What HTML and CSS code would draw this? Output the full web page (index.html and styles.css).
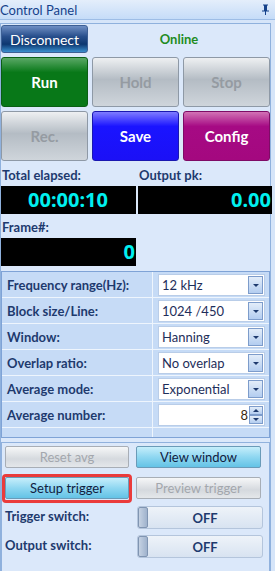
FILE: index.html
```html
<!DOCTYPE html>
<html lang="en">
<head>
    <meta charset="UTF-8">
    <title>Control Panel</title>
    <link rel="stylesheet" href="styles.css">
</head>
<body>
    <div class="header">
        <span>Control Panel</span>
        <svg class="pin" width="9" height="11" viewBox="0 0 9 11">
            <path d="M2 0.5h5v1h-1v5h2v1h-3v3.5h-1v-3.5h-3v-1h2v-5h-1z" fill="#15428b"/>
            <rect x="3" y="1.5" width="1" height="5" fill="#15428b"/>
        </svg>
    </div>

    <div class="content">
        <div class="top-row">
            <button class="btn-disconnect">Disconnect</button>
            <div class="status">Online</div>
        </div>

        <div class="big-grid">
            <button class="big big-run">Run</button>
            <button class="big big-off">Hold</button>
            <button class="big big-off">Stop</button>
            <button class="big big-off">Rec.</button>
            <button class="big big-save">Save</button>
            <button class="big big-config">Config</button>
        </div>

        <div class="meters">
            <div class="meter">
                <div class="meter-label">Total elapsed:</div>
                <div class="display center">00:00:10</div>
            </div>
            <div class="meter">
                <div class="meter-label">Output pk:</div>
                <div class="display">0.00</div>
            </div>
            <div class="meter">
                <div class="meter-label">Frame#:</div>
                <div class="display">0</div>
            </div>
        </div>

        <div class="settings">
            <div class="row">
                <div class="cell-label">Frequency range(Hz):</div>
                <div class="cell-value"><div class="combo"><span>12 kHz</span><i class="arrow"></i></div></div>
            </div>
            <div class="row">
                <div class="cell-label">Block size/Line:</div>
                <div class="cell-value"><div class="combo"><span>1024 /450</span><i class="arrow"></i></div></div>
            </div>
            <div class="row">
                <div class="cell-label">Window:</div>
                <div class="cell-value"><div class="combo"><span>Hanning</span><i class="arrow"></i></div></div>
            </div>
            <div class="row">
                <div class="cell-label">Overlap ratio:</div>
                <div class="cell-value"><div class="combo"><span>No overlap</span><i class="arrow"></i></div></div>
            </div>
            <div class="row">
                <div class="cell-label">Average mode:</div>
                <div class="cell-value"><div class="combo"><span>Exponential</span><i class="arrow"></i></div></div>
            </div>
            <div class="row">
                <div class="cell-label">Average number:</div>
                <div class="cell-value">
                    <div class="spin">
                        <span>8</span>
                        <div class="spin-btns"><i class="up"></i><i class="down"></i></div>
                    </div>
                </div>
            </div>
            <div class="row row-empty">
                <div class="cell-label"></div>
                <div class="cell-value"></div>
            </div>
        </div>

        <div class="actions">
            <div class="action-grid">
                <button class="act act-off">Reset avg</button>
                <button class="act act-on">View window</button>
                <div class="marked"><button class="act act-on">Setup trigger</button></div>
                <button class="act act-off">Preview trigger</button>
            </div>
            <div class="switch-row">
                <div class="switch-label">Trigger switch:</div>
                <div class="toggle"><i class="knob"></i><span>OFF</span></div>
            </div>
            <div class="switch-row">
                <div class="switch-label">Output switch:</div>
                <div class="toggle"><i class="knob"></i><span>OFF</span></div>
            </div>
        </div>
    </div>
</body>
</html>
```

FILE: styles.css
```css
body {
    margin: 0;
    width: 275px;
    height: 571px;
    overflow: hidden;
    background-color: #d6e5f9;
    font-family: Lato, "Noto Sans", sans-serif;
    font-size: 13px;
    color: #1e3a6e;
}

button {
    font-family: inherit;
    cursor: pointer;
}

.header {
    height: 19px;
    display: flex;
    align-items: center;
    justify-content: space-between;
    padding: 0 5px 0 0;
    background: linear-gradient(#e4eefb, #c5dcf8);
    border-bottom: 1px solid #9dbde6;
    color: #15428b;
    font-size: 13px;
}

.header .pin {
    display: block;
}

.content {
    margin-top: 3px;
    width: 269px;
    height: 548px;
    border: 1px solid #8fb1dd;
    border-bottom: none;
    padding: 1px 0 0 0;
    background-color: #dbe8fa;
}

.top-row {
    display: flex;
    align-items: center;
    height: 28px;
}

.btn-disconnect {
    width: 87px;
    height: 28px;
    margin: 0;
    border: 1px solid #3d5f94;
    border-radius: 3px;
    background: linear-gradient(#6f8fc4 0%, #284f8c 40%, #0d3770 70%, #3a8fce 100%);
    color: #ffffff;
    font-size: 14px;
}

.status {
    flex: 1;
    text-align: center;
    color: #1f8c1f;
    font-weight: bold;
    font-size: 13px;
}

.big-grid {
    display: grid;
    grid-template-columns: 87px 87px 87px;
    grid-auto-rows: 50px;
    gap: 4px 4px;
    margin-top: 4px;
}

.big {
    margin: 0;
    border-radius: 3px;
    font-size: 15px;
    font-weight: bold;
}

.big-run {
    border: 1px solid #0a5e14;
    background: linear-gradient(#5aa866 0%, #087818 30%, #087818 100%);
    color: #ffffff;
}

.big-off {
    border: 1px solid #8e99a6;
    background: linear-gradient(#eef0f2 0%, #b4bcc4 45%, #cfd5db 100%);
    color: #959ba2;
}

.big-save {
    border: 1px solid #1a18b0;
    background: linear-gradient(#7f7cff 0%, #1a14ff 30%, #1b10f6 100%);
    color: #ffffff;
}

.big-config {
    border: 1px solid #7e0b66;
    background: linear-gradient(#d272b5 0%, #a60a84 30%, #a4087f 100%);
    color: #ffffff;
}

.meters {
    display: grid;
    grid-template-columns: 135px 134px;
    gap: 3px 2px;
    margin-top: 4px;
}

.meter-label {
    height: 21px;
    line-height: 21px;
    padding-left: 1px;
    font-weight: bold;
    color: #1e3a6e;
}

.display {
    height: 28px;
    line-height: 28px;
    background-color: #000000;
    color: #00f0f0;
    font-family: "Noto Sans", sans-serif;
    font-size: 20px;
    font-weight: bold;
    text-align: right;
    padding-right: 1px;
}

.display.center {
    text-align: center;
}

.settings {
    margin-top: 5px;
    border: 1px solid #7fa3d6;
    background-color: #c6dbf6;
}

.row {
    display: flex;
    height: 25px;
    border-bottom: 1px solid #eef5fd;
}

.row-empty {
    height: 9px;
    border-bottom: none;
}

.cell-label {
    width: 145px;
    display: flex;
    align-items: center;
    padding-left: 5px;
    border-right: 1px solid #eef5fd;
    font-weight: bold;
    color: #1e3a6e;
}

.cell-value {
    flex: 1;
    display: flex;
    align-items: center;
    padding: 0 4px 0 5px;
}

.combo {
    flex: 1;
    height: 20px;
    display: flex;
    align-items: center;
    justify-content: space-between;
    background-color: #ffffff;
    border: 1px solid #b9cde8;
    padding-left: 3px;
    color: #1e2e5a;
}

.arrow {
    width: 13px;
    height: 16px;
    margin-right: 1px;
    border: 1px solid #7d9ccb;
    background: linear-gradient(#e3edf9, #b3cdf0);
    position: relative;
}

.arrow::after {
    content: "";
    position: absolute;
    left: 4px;
    top: 7px;
    border-left: 3px solid transparent;
    border-right: 3px solid transparent;
    border-top: 3px solid #1e3a6e;
}

.spin {
    flex: 1;
    height: 20px;
    display: flex;
    align-items: center;
    justify-content: flex-end;
    background-color: #ffffff;
    border: 1px solid #b9cde8;
    color: #3a2a10;
}

.spin span {
    padding-right: 1px;
}

.spin-btns {
    display: flex;
    flex-direction: column;
    width: 14px;
    height: 18px;
    margin-right: 1px;
}

.spin-btns i {
    flex: 1;
    border: 1px solid #7d9ccb;
    background: linear-gradient(#e3edf9, #b3cdf0);
    position: relative;
}

.spin-btns .up::after,
.spin-btns .down::after {
    content: "";
    position: absolute;
    left: 3px;
    top: 2px;
    border-left: 3px solid transparent;
    border-right: 3px solid transparent;
}

.spin-btns .up::after {
    border-bottom: 3px solid #1e3a6e;
}

.spin-btns .down::after {
    border-top: 3px solid #1e3a6e;
}

.actions {
    margin-top: 4px;
    height: 128px;
    border: 1px solid #90b1dd;
    border-bottom: none;
    padding: 3px 0 0 3px;
}

.action-grid {
    display: grid;
    grid-template-columns: 124px 125px;
    grid-auto-rows: 23px;
    gap: 8px 7px;
}

.act {
    margin: 0;
    height: 22px;
    border-radius: 2px;
    font-size: 13px;
}

.act-off {
    border: 1px solid #a8aeb6;
    background: linear-gradient(#f6f7f8 0%, #d5d9de 60%, #e4e7ea 100%);
    color: #a3a7ad;
}

.act-on {
    border: 1px solid #6a9bb8;
    background: linear-gradient(#c6eefb 0%, #8fd7f1 50%, #64c3e6 100%);
    color: #102040;
}

.marked {
    outline: 3px solid #ea3b3b;
    outline-offset: 0px;
    border-radius: 1px;
    box-shadow: 0 1px 3px rgba(0, 0, 0, 0.3);
}

.marked .act {
    width: 100%;
    display: block;
}

.switch-row {
    display: flex;
    align-items: center;
    margin-top: 6px;
}

.switch-row + .switch-row {
    margin-top: 6px;
}

.switch-label {
    width: 132px;
    font-weight: bold;
    color: #1e3a6e;
    margin-top: -4px;
}

.toggle {
    width: 124px;
    height: 21px;
    display: flex;
    align-items: center;
    border: 1px solid #b4c5dc;
    border-radius: 3px;
    background: linear-gradient(#eef3f9, #d8e3f1);
}

.knob {
    width: 8px;
    height: 19px;
    border: 1px solid #8095b2;
    border-radius: 2px;
    background: linear-gradient(90deg, #c5d2e3, #9fb2cc);
}

.toggle span {
    flex: 1;
    text-align: center;
    font-weight: bold;
    color: #1e3a6e;
    font-size: 13px;
}
```
